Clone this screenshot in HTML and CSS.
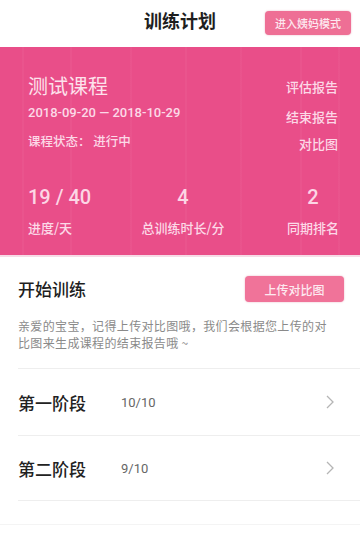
FILE: index.html
```html
<!DOCTYPE html>
<html lang="zh-CN">
<head>
<meta charset="utf-8">
<title>训练计划</title>
<link rel="stylesheet" href="styles.css">
</head>
<body>
<div class="page">
  <header class="header">
    <div class="header-side"></div>
    <h1 class="header-title">训练计划</h1>
    <div class="header-side header-right">
      <button class="btn btn-small">进入姨妈模式</button>
    </div>
  </header>

  <section class="panel">
    <div class="panel-top">
      <div class="course">
        <div class="course-name">测试课程</div>
        <div class="course-date">2018-09-20 — 2018-10-29</div>
        <div class="course-status">课程状态： 进行中</div>
      </div>
      <div class="links">
        <div class="link link-1">评估报告</div>
        <div class="link link-2">结束报告</div>
        <div class="link link-3">对比图</div>
      </div>
    </div>
    <div class="stats">
      <div class="stat stat-left">
        <div class="stat-num">19 / 40</div>
        <div class="stat-label">进度/天</div>
      </div>
      <div class="stat stat-mid">
        <div class="stat-num">4</div>
        <div class="stat-label">总训练时长/分</div>
      </div>
      <div class="stat stat-right">
        <div class="stat-num">2</div>
        <div class="stat-label">同期排名</div>
      </div>
    </div>
  </section>

  <section class="train">
    <div class="train-head">
      <h2 class="train-title">开始训练</h2>
      <button class="btn btn-upload">上传对比图</button>
    </div>
    <p class="train-tip">亲爱的宝宝，记得上传对比图哦，我们会根据您上传的对比图来生成课程的结束报告哦 ~</p>
  </section>

  <ul class="stages">
    <li class="stage">
      <span class="stage-name">第一阶段</span>
      <span class="stage-count">10/10</span>
      <svg class="chev" width="8" height="14" viewBox="0 0 8 14"><path d="M1 1 L7 7 L1 13" fill="none" stroke="#b5b5b5" stroke-width="1.3"/></svg>
    </li>
    <li class="stage">
      <span class="stage-name">第二阶段</span>
      <span class="stage-count">9/10</span>
      <svg class="chev" width="8" height="14" viewBox="0 0 8 14"><path d="M1 1 L7 7 L1 13" fill="none" stroke="#b5b5b5" stroke-width="1.3"/></svg>
    </li>
  </ul>
  <div class="tabbar"></div>
</div>
</body>
</html>
```

FILE: styles.css
```css
* { box-sizing: border-box; }
html, body { margin: 0; padding: 0; background: #fff; }
body {
  font-family: Roboto, "Noto Sans CJK SC", "Noto Sans", sans-serif;
  color: #222;
  width: 360px;
  overflow: hidden;
}
.page { width: 360px; height: 533px; overflow: hidden; }

.header {
  height: 47px;
  display: grid;
  grid-template-columns: 1fr auto 1fr;
  align-items: center;
}
.header-title {
  margin: 0;
  font-size: 18px;
  font-weight: 700;
  color: #1e1e1e;
  line-height: 24px;
  margin-top: -3px;
}
.header-right { display: flex; justify-content: flex-end; padding-right: 9px; }
.btn {
  border: none;
  color: #fde9f0;
  font-family: "Noto Sans CJK SC", sans-serif;
  font-weight: 500;
  border-radius: 4px;
  padding: 0;
  cursor: pointer;
}
.btn-small {
  width: 86px;
  height: 24px;
  margin-top: -1px;
  font-size: 11px;
  background: #ee6f95;
  box-shadow: 0 0 2px rgba(200, 60, 100, 0.4);
}

.panel {
  height: 210px;
  padding: 0 22px 0 28px;
  color: #fcd9e7;
  background-color: #e94e89;
  background-image:
    linear-gradient(90deg,
      transparent 0 22px, rgba(255,255,255,0.035) 22px 24px, transparent 24px 70px,
      rgba(255,255,255,0.035) 70px 72px, transparent 72px 130px,
      rgba(255,255,255,0.03) 130px 132px, transparent 132px 185px,
      rgba(255,255,255,0.035) 185px 187px, transparent 187px 240px,
      rgba(255,255,255,0.03) 240px 242px, transparent 242px 300px,
      rgba(255,255,255,0.035) 300px 302px, transparent 302px 338px,
      rgba(255,255,255,0.03) 338px 340px, transparent 340px);
  border-bottom: 2px solid #f6dbe6;
}
.panel-top {
  display: flex;
  justify-content: space-between;
}
.course-name {
  font-family: "Noto Sans CJK SC", sans-serif;
  font-size: 20px;
  line-height: 28px;
  margin-top: 25px;
  color: #fde2ec;
}
.course-date {
  font-size: 13px;
  font-weight: 500;
  line-height: 20px;
  margin-top: 3px;
}
.course-status {
  font-family: "Noto Sans CJK SC", sans-serif;
  font-weight: 500;
  font-size: 12.5px;
  line-height: 20px;
  margin-top: 8px;
}
.links {
  display: flex;
  flex-direction: column;
  align-items: flex-end;
  font-family: "Noto Sans CJK SC", sans-serif;
  font-weight: 500;
  font-size: 13px;
  line-height: 20px;
}
.link-1 { margin-top: 30px; }
.link-2 { margin-top: 10px; }
.link-3 { margin-top: 7px; }

.stats {
  display: grid;
  grid-template-columns: 1fr 1fr 1fr;
  margin-top: 30px;
}
.stat { display: flex; flex-direction: column; }
.stat-left { align-items: flex-start; }
.stat-mid { align-items: center; justify-self: center; }
.stat-right { align-items: center; justify-self: end; margin-right: -1px; }
.stat-num {
  font-size: 20px;
  font-weight: 500;
  line-height: 26px;
  color: #fcd6e5;
}
.stat-label {
  font-family: "Noto Sans CJK SC", sans-serif;
  font-weight: 500;
  font-size: 13px;
  line-height: 18px;
  margin-top: 9px;
}

.train { padding: 19px 16px 0 18px; }
.train-head {
  display: flex;
  justify-content: space-between;
  align-items: center;
}
.train-title {
  margin: 0;
  font-family: "Noto Sans CJK SC", sans-serif;
  font-size: 17px;
  font-weight: 500;
  line-height: 26px;
  color: #1e1e1e;
}
.btn-upload {
  width: 99px;
  height: 26px;
  font-size: 12px;
  background: #f07399;
  box-shadow: 0 0 2px rgba(200, 60, 100, 0.4);
}
.train-tip {
  margin: 15px 0 0 0;
  width: 315px;
  font-family: "Noto Sans CJK SC", sans-serif;
  font-size: 12px;
  letter-spacing: 0.35px;
  line-height: 17px;
  color: #8a8a8a;
  padding-bottom: 17px;
}

.stages { list-style: none; margin: 0; padding: 0 0 0 18px; }
.stage {
  height: 67px;
  display: flex;
  align-items: center;
  border-top: 1px solid #eeeeee;
  padding-right: 26px;
}
.stage:last-child { border-bottom: 1px solid #eeeeee; height: 66px; }
.stage-name {
  font-family: "Noto Sans CJK SC", sans-serif;
  font-size: 17px;
  font-weight: 500;
  color: #222;
  width: 103px;
}
.stage-count {
  font-size: 13px;
  color: #666;
  flex: 1;
}
.chev { display: block; }

.tabbar {
  margin-top: 23px;
  height: 12px;
  border-top: 1px solid #f4f4f4;
}
```
